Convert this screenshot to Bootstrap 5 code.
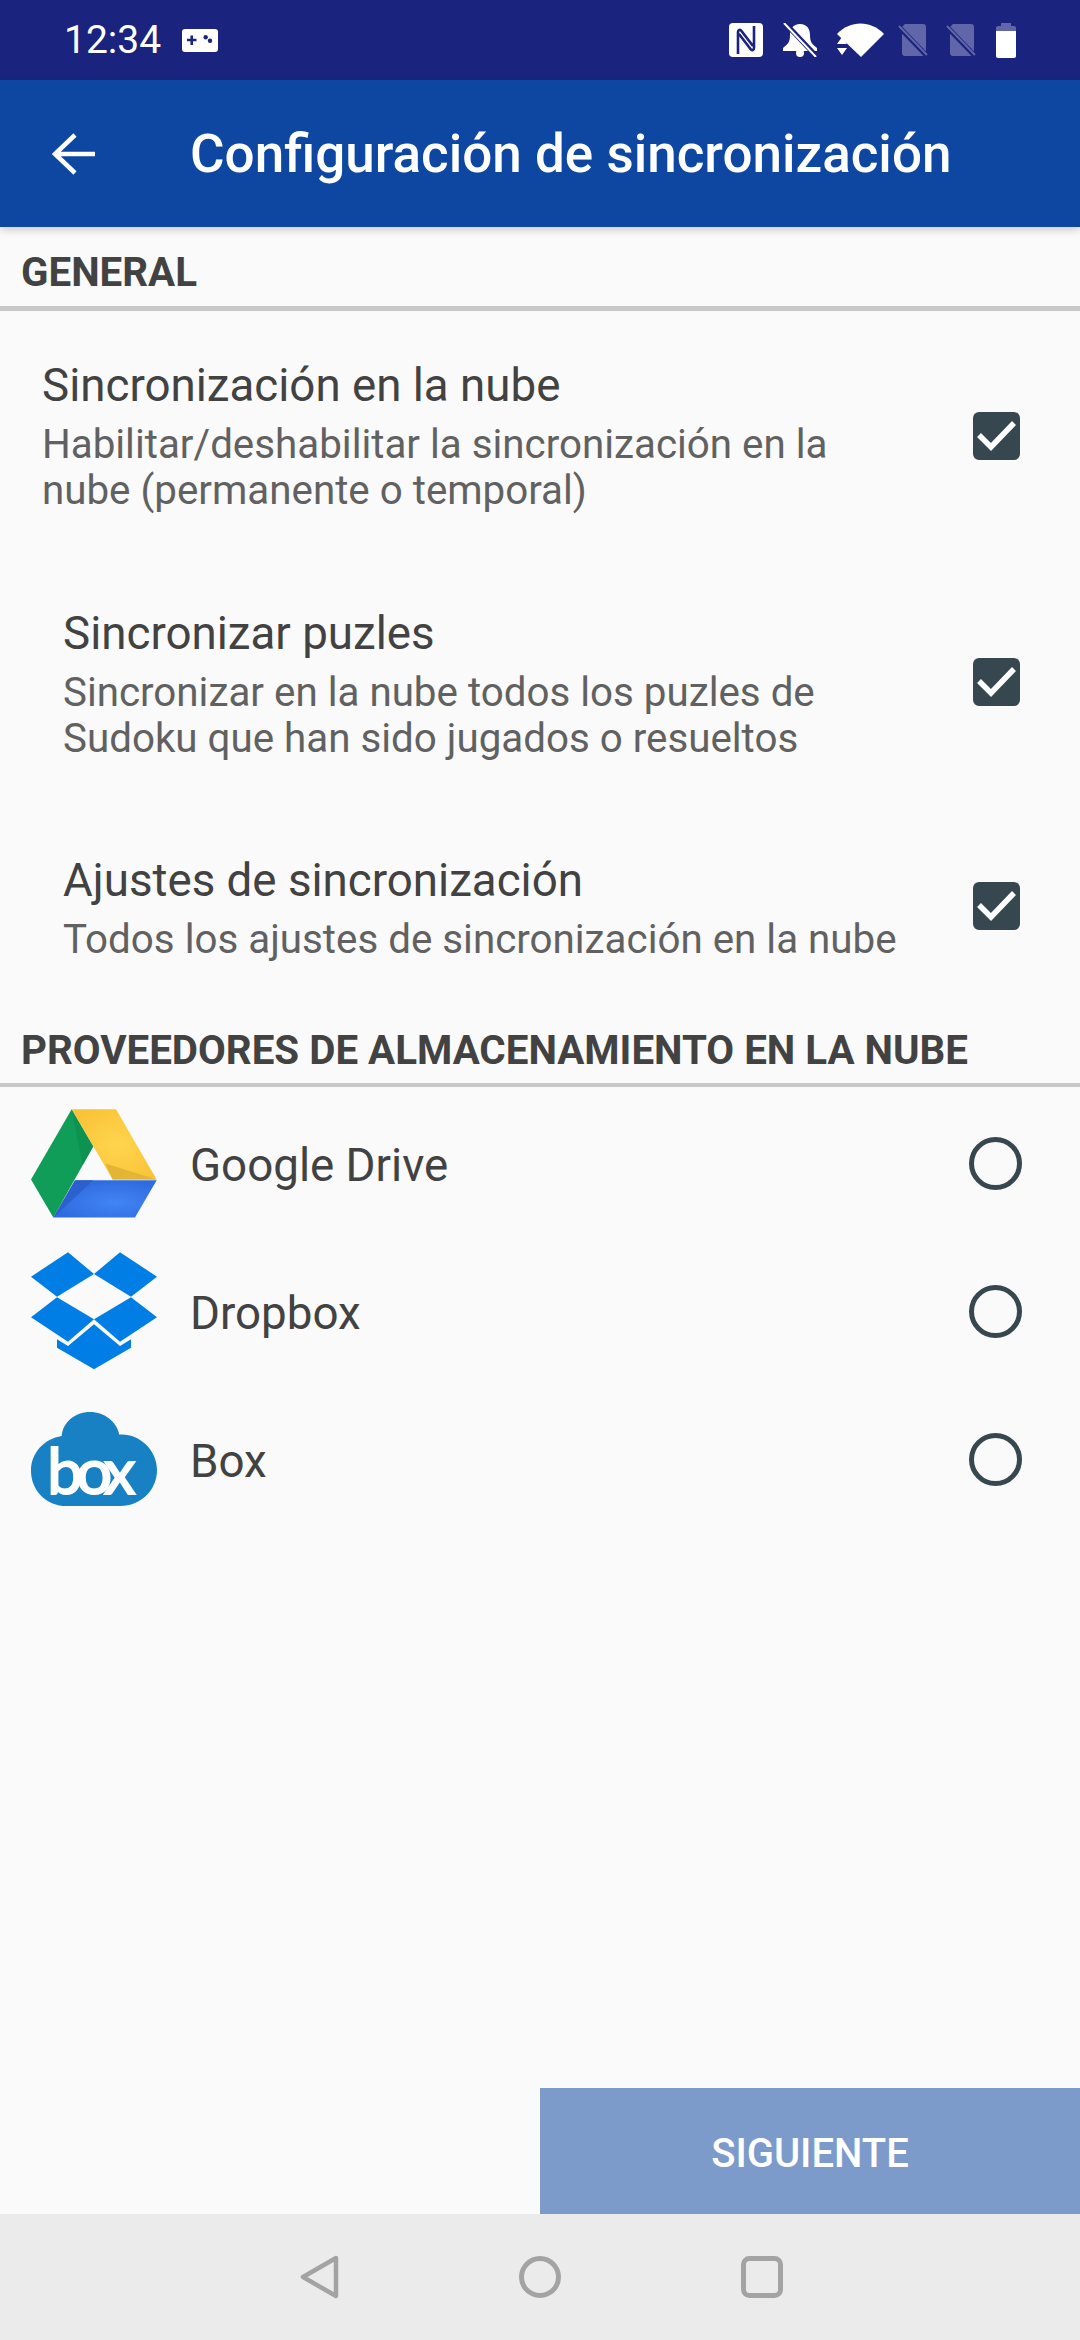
<!DOCTYPE html>
<html lang="es">
<head>
<meta charset="UTF-8">
<meta name="viewport" content="width=device-width, initial-scale=1.0">
<title>Configuración de sincronización</title>
<link href="https://cdn.jsdelivr.net/npm/bootstrap@5.3.0/dist/css/bootstrap.min.css" rel="stylesheet">
<style>
    body {
        background-color: #fafafa;
        font-family: Roboto, "Liberation Sans", sans-serif;
    }
    .screen { height: 2340px; width: 1080px; overflow: hidden; }
    .status-bar { height: 80px; background-color: #1a237e; padding: 0 64px; color: #fff; }
    .status-time { font-size: 39px; line-height: 1; margin-right: 21px; }
    .gap-20 { margin-left: 20px; }
    .gap-14 { margin-left: 14px; }
    .gap-18 { margin-left: 18px; }
    .tool-bar {
        height: 147px;
        background-color: #0d47a1;
        color: #fff;
        box-shadow: 0 3px 8px rgba(0,0,0,.18);
        position: relative;
    }
    .back-arrow { margin-left: 52px; margin-right: 94px; }
    .tool-title { font-size: 53px; font-weight: 500; margin: 0; padding-top: 2px; line-height: 1; }
    .section-head {
        font-size: 40.320px;
        font-weight: 700;
        color: #424242;
        padding-left: 21px;
        line-height: 48px;
        border-bottom: 4px solid #c8c8c8;
    }
    .head-general { padding-top: 22px; padding-bottom: 9px; border-bottom-width: 5px; }
    .head-cloud { padding-top: 18px; padding-bottom: 8px; }
    .pref-row { padding: 46px 60px 46px 0; }
    .pref-first { padding-top: 48px; }
    .pref-main { padding-left: 42px; }
    .pref-sub .pref-main { padding-left: 63px; }
    .pref-second { padding-top: 47px; }
    .pref-title { font-size: 45.700px; line-height: 54px; margin-bottom: 9px; color: #424242; }
    .pref-text { font-size: 40.320px; line-height: 46px; color: #616161; }
    .check-box {
        width: 47px; height: 48px;
        background-color: #37474f;
        border-radius: 6px;
        flex-shrink: 0;
    }
    .pref-first .check-box { margin-bottom: 2px; }
    .pref-sub .check-box { margin-bottom: 6px; }
    .radio-ring {
        width: 53px; height: 53px;
        border: 5px solid #37474f;
        border-radius: 50%;
        flex-shrink: 0;
    }
    .provider-row { height: 148px; padding: 0 58px 0 31px; }
    .provider-first { margin-top: 2px; }
    .provider-logo { width: 126px; margin-right: 33px; flex-shrink: 0; overflow: visible; }
    .provider-name { font-size: 45.700px; color: #424242; padding-top: 6px; }
    .next-btn {
        width: 540px; height: 126px;
        background-color: #7c9aca;
        color: #fff;
        border: 0;
        border-radius: 0;
        font-size: 40px;
        font-weight: 500;
        padding: 5px 0 0;
    }
    .next-btn:hover, .next-btn:disabled { background-color: #7c9aca; color: #fff; opacity: 1; }
    .nav-strip { height: 126px; background-color: #ebebeb; gap: 180px; padding-left: 3px; }
</style>
</head>
<body>
<div class="screen d-flex flex-column">
    <div class="status-bar d-flex align-items-center">
        <span class="status-time">12:34</span>
        <svg width="36" height="23" viewBox="0 0 36 23"><rect width="36" height="23" rx="3" fill="#fff"/><path d="M5 11h9.500M9.750 6.500v9.500" stroke="#1a237e" stroke-width="2.600"/><circle cx="23.700" cy="8.300" r="2.200" fill="#1a237e"/><circle cx="28" cy="11.700" r="2.200" fill="#1a237e"/></svg>
        <div class="d-flex align-items-center ms-auto">
            <svg width="34" height="34" viewBox="0 0 34 34"><rect width="34" height="34" rx="4" fill="#fff"/><path d="M9 31V9c0-2 2-3 3.500-1L24 23M25 3v22c0 2-2 3-3.500 1L10 11" fill="none" stroke="#1a237e" stroke-width="2.600"/></svg>
            <svg class="gap-20" width="34" height="34" viewBox="0 0 34 34"><path d="M17 1c-7 0-10 5-10 11 0 7-2 9-7 13v3h34v-3c-5-4-7-6-7-13 0-6-3-11-10-11z" fill="#fff"/><circle cx="17" cy="30" r="4" fill="#fff"/><path d="M2 0l32 34" stroke="#1a237e" stroke-width="5"/><path d="M1 0l32 34" stroke="#fff" stroke-width="2"/></svg>
            <svg class="gap-20" width="47" height="34" viewBox="0 0 47 34"><path d="M0 11C13-3 34-3 47 11L24 34z" fill="#fff"/><path d="M0 21l5-7 5 7zM0 25l5 7 5-7z" fill="#fff"/><path d="M0 23h10" stroke="#1a237e" stroke-width="1"/></svg>
            <svg class="gap-14" width="30" height="34" viewBox="0 0 30 34"><path d="M7 1h18a3 3 0 0 1 3 3v26a3 3 0 0 1-3 3H7a3 3 0 0 1-3-3V4z" fill="#6066a8"/><path d="M0 3l30 31" stroke="#1a237e" stroke-width="5"/><path d="M1 3l28 29" stroke="#6066a8" stroke-width="2"/></svg>
            <svg class="gap-18" width="30" height="34" viewBox="0 0 30 34"><path d="M7 1h18a3 3 0 0 1 3 3v26a3 3 0 0 1-3 3H7a3 3 0 0 1-3-3V4z" fill="#6066a8"/><path d="M0 3l30 31" stroke="#1a237e" stroke-width="5"/><path d="M1 3l28 29" stroke="#6066a8" stroke-width="2"/></svg>
            <svg class="gap-20" width="20" height="35" viewBox="0 0 20 35"><path d="M5 0h10v3h3a2 2 0 0 1 2 2v3H0V5a2 2 0 0 1 2-2h3z" fill="#6066a8"/><path d="M0 8h20v25a2 2 0 0 1-2 2H2a2 2 0 0 1-2-2z" fill="#fff"/></svg>
        </div>
    </div>

    <div class="tool-bar d-flex align-items-center">
        <svg class="back-arrow" width="44" height="42" viewBox="0 0 44 42"><path d="M43 21H3M23 2L3 21l20 19" fill="none" stroke="#fff" stroke-width="4.500"/></svg>
        <h1 class="tool-title">Configuración de sincronización</h1>
    </div>

    <div class="section-head head-general">GENERAL</div>

    <div class="pref-row pref-first d-flex align-items-center justify-content-between">
        <div class="pref-main">
            <div class="pref-title">Sincronización en la nube</div>
            <div class="pref-text">Habilitar/deshabilitar la sincronización en la<br>nube (permanente o temporal)</div>
        </div>
        <div class="check-box"><svg class="d-block" width="47" height="48" viewBox="0 0 47 48"><path d="M6 23l12 12L41 11" fill="none" stroke="#fff" stroke-width="5.500"/></svg></div>
    </div>
    <div class="pref-row pref-sub pref-second d-flex align-items-center justify-content-between">
        <div class="pref-main">
            <div class="pref-title">Sincronizar puzles</div>
            <div class="pref-text">Sincronizar en la nube todos los puzles de<br>Sudoku que han sido jugados o resueltos</div>
        </div>
        <div class="check-box"><svg class="d-block" width="47" height="48" viewBox="0 0 47 48"><path d="M6 23l12 12L41 11" fill="none" stroke="#fff" stroke-width="5.500"/></svg></div>
    </div>
    <div class="pref-row pref-sub d-flex align-items-center justify-content-between">
        <div class="pref-main">
            <div class="pref-title">Ajustes de sincronización</div>
            <div class="pref-text">Todos los ajustes de sincronización en la nube</div>
        </div>
        <div class="check-box"><svg class="d-block" width="47" height="48" viewBox="0 0 47 48"><path d="M6 23l12 12L41 11" fill="none" stroke="#fff" stroke-width="5.500"/></svg></div>
    </div>

    <div class="section-head head-cloud">PROVEEDORES DE ALMACENAMIENTO EN LA NUBE</div>

    <div class="provider-row provider-first d-flex align-items-center">
        <svg class="provider-logo" height="109" viewBox="93 87 378 326">
            <defs>
                <radialGradient id="driveBlue" cx=".6" cy=".6" r=".6"><stop offset="0" stop-color="#4285f4"/><stop offset="1" stop-color="#2f6be0"/></radialGradient>
                <radialGradient id="driveYellow" cx=".55" cy=".5" r=".6"><stop offset="0" stop-color="#ffd54f"/><stop offset="1" stop-color="#f9c337"/></radialGradient>
            </defs>
            <polygon points="215,87 280,198 160,412 93,298" fill="#0f9d58"/>
            <polygon points="215,87 280,198 248,255" fill="#0c8a4d" opacity=".6"/>
            <polygon points="215,87 348,87 470,298 338,298" fill="url(#driveYellow)"/>
            <polygon points="316,250 470,298 338,298" fill="#e3b535"/>
            <polygon points="225,300 470,300 405,412 160,412" fill="url(#driveBlue)"/>
            <polygon points="225,300 280,300 160,412" fill="#2a5cc8" opacity=".8"/>
        </svg>
        <span class="provider-name flex-grow-1">Google Drive</span>
        <span class="radio-ring"></span>
    </div>
    <div class="provider-row d-flex align-items-center">
        <svg class="provider-logo" height="118" viewBox="93 517 378 352">
            <g fill="#007ee5">
                <polygon points="93,590 204,517 282,582 171,650"/>
                <polygon points="282,582 360,517 471,590 393,650"/>
                <polygon points="93,712 171,652 282,718 204,785"/>
                <polygon points="282,718 393,652 471,712 360,785"/>
                <polygon points="171,778 204,798 282,733 360,798 393,778 393,803 282,868 171,803"/>
            </g>
        </svg>
        <span class="provider-name flex-grow-1">Dropbox</span>
        <span class="radio-ring"></span>
    </div>
    <div class="provider-row d-flex align-items-center">
        <svg class="provider-logo" height="94" viewBox="93 996 378 282">
            <path d="M185 1068c4-42 40-72 85-72s80 30 88 68c60-4 113 46 113 106 0 62-50 108-110 108H200c-60 0-107-46-107-106 0-54 40-96 92-104z" fill="#1781c4"/>
            <text x="142" y="1241" font-family="Lato, sans-serif" font-size="190" letter-spacing="-20" fill="#fff" stroke="#fff" stroke-width="6">box</text>
        </svg>
        <span class="provider-name flex-grow-1">Box</span>
        <span class="radio-ring"></span>
    </div>

    <div class="flex-grow-1"></div>
    <div class="d-flex justify-content-end">
        <button type="button" class="btn next-btn">SIGUIENTE</button>
    </div>
    <div class="nav-strip d-flex align-items-center justify-content-center">
        <svg width="39" height="44" viewBox="0 0 39 44"><path d="M36 3L3 22l33 19z" fill="none" stroke="#a3a3a3" stroke-width="4.500" stroke-linejoin="round"/></svg>
        <svg width="42" height="42" viewBox="0 0 42 42"><circle cx="21" cy="21" r="18.500" fill="none" stroke="#a3a3a3" stroke-width="5"/></svg>
        <svg width="42" height="42" viewBox="0 0 42 42"><rect x="2.500" y="2.500" width="37" height="37" rx="6" fill="none" stroke="#a3a3a3" stroke-width="5"/></svg>
    </div>
</div>
<script src="https://cdn.jsdelivr.net/npm/bootstrap@5.3.0/dist/js/bootstrap.bundle.min.js"></script>
</body>
</html>
